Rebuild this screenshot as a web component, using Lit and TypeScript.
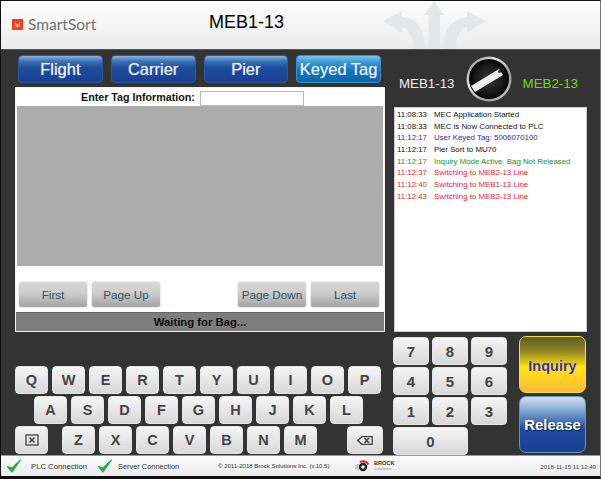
import { LitElement, html, css } from "lit";
import { customElement } from "lit/decorators.js";

const LOG: [string, string, string][] = [
  ["11:08:33", "MEC Application Started", "k"],
  ["11:08:33", "MEC is Now Connected to PLC", "k"],
  ["11:12:17", "User Keyed Tag: 5006070100", "b"],
  ["11:12:17", "Pier Sort to MU70", "k"],
  ["11:12:17", "Inquiry Mode Active. Bag Not Released", "g"],
  ["11:12:37", "Switching to MEB2-13 Line", "r"],
  ["11:12:40", "Switching to MEB1-13 Line", "r"],
  ["11:12:43", "Switching to MEB2-13 Line", "r"],
];

const check = html`<svg class="check" width="16" height="16" viewBox="0 0 16 16"><path d="M1.5 8.5 L6 14 L14.5 2 L6.2 10 Z" fill="#2fa84a" stroke="#2fa84a" stroke-width="1.2" stroke-linejoin="round"/></svg>`;

@customElement("app-root")
export class AppRoot extends LitElement {
  static styles = css`
    :host { display: block; width: 601px; height: 479px; font-family: "Liberation Sans", Arial, sans-serif; }
    .app { width: 601px; height: 479px; box-sizing: border-box; background: #333; border: 1px solid #111; border-right-color: #777; border-bottom: 3px solid #111; display: flex; flex-direction: column; overflow: hidden; }
    .header { height: 49px; flex: none; background: linear-gradient(#fdfdfd, #ececec); border-bottom: 1px solid #555; box-sizing: border-box; display: flex; align-items: center; position: relative; }
    .logo { margin-left: 11px; flex: none; display: block; margin-top: -2px; }
    .brand { font: 15.5px Lato, sans-serif; color: #707070; margin-left: 5px; width: 181px; flex: none; margin-top: -2px; }
    .title { font-size: 18px; color: #000; margin-top: -5px; }
    .arrows { position: absolute; left: 379px; top: 0; }
    .main { display: flex; padding: 5px 0 0 14px; gap: 9px; height: 284px; box-sizing: border-box; flex: none; }
    .left { width: 370px; flex: none; display: flex; flex-direction: column; }
    .tabs { display: flex; gap: 8px; padding: 0 4px 0 3px; height: 28px; margin-bottom: 4px; flex: none; }
    .tab { flex: 1; border: 1px solid #2a5a9f; border-radius: 4px; color: #f2f5ff; font-size: 16.5px; display: flex; align-items: center; justify-content: center; background: linear-gradient(#8fb3dc 0, #3f72b4 20%, #1f4e9c 45%, #1a3f95 100%); text-shadow: 0 0 1px #8fa6d8; }
    .tab.active { background: linear-gradient(#7fc3ea 0, #3797d6 25%, #1176bd 55%, #0f66ad 100%); border-color: #3a8fca; white-space: nowrap; }
    .panel { height: 245px; box-sizing: border-box; background: #fff; border: 1px solid #f0f0f0; display: flex; flex-direction: column; }
    .tagrow { height: 18px; display: flex; align-items: center; padding-left: 65px; font-size: 10.7px; font-weight: bold; color: #111; flex: none; }
    .tagrow input { margin: 2px 0 0 5px; width: 102px; height: 13px; box-sizing: content-box; padding: 0; border: 1px solid #bbb; background: #fff; outline: none; }
    .grid { margin: 0 1px; height: 160px; flex: none; background: #acacac; }
    .pager { display: flex; padding: 16px 3px 0; gap: 5px; flex: none; }
    .pg { width: 68px; height: 25px; border-radius: 2px; font-size: 11.7px; color: #2f5560; background: linear-gradient(#d8d8d8, #cfcfcf 40%, #a4a4a4); display: flex; align-items: center; justify-content: center; box-shadow: 0 0 0 1px #eee; }
    .spacer { width: 68px; }
    .wait { margin-top: 5px; flex: 1; background: #7d7d7d; border-top: 1px solid #666; font-size: 11.3px; font-weight: bold; color: #0a0a0a; display: flex; align-items: center; justify-content: center; }
    .right { width: 193px; flex: none; display: flex; flex-direction: column; }
    .selector { height: 52px; display: flex; align-items: center; justify-content: space-between; padding: 4px 9px 0 5px; box-sizing: border-box; font-size: 13.3px; color: #eee; flex: none; }
    .selector .on { color: #6fdc0a; }
    .knob { display: block; margin-top: -8px; }
    .log { height: 225px; background: #fff; border: 1px solid #ccc; box-sizing: border-box; padding: 1px 0 0 1px; font-size: 7.85px; }
    .line { height: 11.7px; line-height: 11.7px; display: flex; white-space: nowrap; }
    .line .t { width: 38px; flex: none; padding-left: 1px; box-sizing: border-box; }
    .k { color: #111; } .b { color: #2f28a0; } .g { color: #1c9026; } .r { color: #f52525; }
    .bottom { display: flex; padding: 3px 0 0 14px; flex: none; height: 121px; box-sizing: border-box; }
    .kb { width: 378px; flex: none; display: flex; flex-direction: column; gap: 2px; padding-top: 29px; box-sizing: border-box; }
    .row { display: flex; gap: 4px; height: 28px; }
    .row.r2 { padding-left: 19px; }
    .key { width: 33px; height: 28px; flex: none; box-sizing: border-box; border-radius: 4px; background: linear-gradient(#f5f5f5, #d8d8d8); border: 1px solid #e6e6e6; color: #444; font-size: 14.5px; font-weight: bold; display: flex; align-items: center; justify-content: center; }
    .gap { width: 6px; flex: none; }
    .gap2 { width: 22px; flex: none; }
    .key.wide { width: 36px; }
    .num { width: 126px; flex: none; display: grid; grid-template-columns: repeat(3, 36px); grid-auto-rows: 28px; gap: 2px 3px; align-content: start; }
    .num .key { width: 36px; font-size: 15px; }
    .num .zero { grid-column: span 2; width: 75px; }
    .acts { display: flex; flex-direction: column; gap: 3px; width: 67px; margin-top: -1px; }
    .act { height: 57px; box-sizing: border-box; border-radius: 7px; display: flex; align-items: center; justify-content: center; font-size: 14.5px; font-weight: bold; }
    .inq { border: 1px solid #f6e31b; color: #3a2f8f; padding-top: 3px; background: linear-gradient(#5d5a2c, #8f8420 25%, #ffe313 55%, #fdbb3a); text-shadow: 0 0 1px #fff; }
    .rel { border: 1px solid #5a97cf; color: #fff; font-size: 15px; background: linear-gradient(#d4e2f0, #8aaed8 22%, #1f4c9e 58%, #1b3f94); text-shadow: 1px 1px 1px #0a1a50; }
    .status { height: 21px; flex: none; background: linear-gradient(#fafafa, #ececec); display: flex; align-items: center; font-size: 7.7px; color: #333; border-top: 1px solid #999; box-sizing: border-box; white-space: nowrap; }
    .check { display: block; margin-left: 5px; flex: none; }
    .s1 { margin-left: 9px; width: 61px; flex: none; }
    .s2 { margin-left: 5px; width: 75px; font-size: 7.4px; flex: none; }
    .copy { margin-left: 25px; width: 111px; font-size: 6.05px; flex: none; }
    .blogo { margin-left: 26px; flex: none; display: flex; align-items: center; gap: 3px; }
    .bname { font-size: 5.6px; font-weight: bold; line-height: 5.5px; color: #333; }
    .bname span { display: block; font-weight: normal; color: #888; font-size: 4.4px; line-height: 4.5px; }
    .date { margin-left: auto; margin-right: 4px; font-size: 6.1px; color: #444; }
  `;

  render() {
    return html`<div class="app">
      <div class="header">
        <svg class="logo" width="11" height="11" viewBox="0 0 11 11"><rect width="11" height="11" fill="#ef3f23"/><path d="M3 3 L4 5 L4 8 M8 3 L7 5 L7 8 M5.5 5 L5.5 9" stroke="#fbd3b0" stroke-width="1" fill="none"/></svg>
        <span class="brand">SmartSort</span>
        <span class="title">MEB1-13</span>
        <svg class="arrows" width="110" height="48" viewBox="0 0 110 48">
          <g fill="#e4e6e7">
            <path d="M54 0 L64 14 H60 V48 H48.5 V14 H44 Z"/>
            <path d="M3 20 L22 10 V16 C36 17 45 27 45 48 H33 C33 36 30 28 22 26 V32 Z"/>
            <path d="M106 20 L87 10 V16 C73 17 64 27 64 48 H76 C76 36 79 28 87 26 V32 Z"/>
          </g>
        </svg>
      </div>
      <div class="main">
        <div class="left">
          <div class="tabs">
            <div class="tab">Flight</div><div class="tab">Carrier</div><div class="tab">Pier</div><div class="tab active">Keyed Tag</div>
          </div>
          <div class="panel">
            <div class="tagrow">Enter Tag Information:<input /></div>
            <div class="grid"></div>
            <div class="pager">
              <div class="pg">First</div><div class="pg">Page Up</div><div class="spacer"></div><div class="pg">Page Down</div><div class="pg">Last</div>
            </div>
            <div class="wait">Waiting for Bag...</div>
          </div>
        </div>
        <div class="right">
          <div class="selector">
            <span>MEB1-13</span>
            <svg class="knob" width="46" height="46" viewBox="0 0 46 46">
              <defs><linearGradient id="ring" x1="0" y1="0" x2="1" y2="1"><stop offset="0" stop-color="#777"/><stop offset=".35" stop-color="#e4e4e4"/><stop offset=".7" stop-color="#999"/><stop offset="1" stop-color="#dcdcdc"/></linearGradient>
              <radialGradient id="fc" cx=".5" cy=".5" r=".5"><stop offset="0" stop-color="#3a3a3a"/><stop offset=".7" stop-color="#181818"/><stop offset="1" stop-color="#050505"/></radialGradient></defs>
              <circle cx="23" cy="23" r="22.5" fill="url(#ring)"/>
              <circle cx="23" cy="23" r="20" fill="url(#fc)"/>
              <path d="M5 30 L33 13 L37 19 L9 36 Z" fill="#f0f0f0"/>
              <circle cx="33.5" cy="15.5" r="1.6" fill="#333"/>
            </svg>
            <span class="on">MEB2-13</span>
          </div>
          <div class="log">
            ${LOG.map(([t, m, c]) => html`<div class="line ${c}"><span class="t">${t}</span><span>${m}</span></div>`)}
          </div>
        </div>
      </div>
      <div class="bottom">
        <div class="kb">
          <div class="row">${[..."QWERTYUIOP"].map((k) => html`<div class="key">${k}</div>`)}</div>
          <div class="row r2">${[..."ASDFGHJKL"].map((k) => html`<div class="key">${k}</div>`)}</div>
          <div class="row">
            <div class="key"><svg width="14" height="12" viewBox="0 0 14 12"><rect x="1" y="1" width="12" height="10" fill="none" stroke="#444" stroke-width="1.3"/><path d="M4.5 3.5 L9.5 8.5 M9.5 3.5 L4.5 8.5" stroke="#444" stroke-width="1.6"/></svg></div>
            <div class="gap"></div>
            ${[..."ZXCVBNM"].map((k) => html`<div class="key">${k}</div>`)}
            <div class="gap2"></div>
            <div class="key wide"><svg width="16" height="9" viewBox="0 0 16 9"><path d="M5 .7 H15.2 V8.3 H5 L.8 4.5 Z" fill="none" stroke="#444" stroke-width="1.3"/><path d="M7.5 2 L12 7 M12 2 L7.5 7" stroke="#444" stroke-width="1.6"/></svg></div>
          </div>
        </div>
        <div class="num">
          ${["7", "8", "9", "4", "5", "6", "1", "2", "3"].map((k) => html`<div class="key">${k}</div>`)}
          <div class="key zero">0</div>
        </div>
        <div class="acts">
          <div class="act inq">Inquiry</div>
          <div class="act rel">Release</div>
        </div>
      </div>
      <div class="status">
        ${check}<span class="s1">PLC Connection</span>${check}<span class="s2">Server Connection</span>
        <span class="copy">© 2011-2018 Brock Solutions Inc. (v.10.5)</span>
        <div class="blogo">
          <svg width="16" height="13" viewBox="0 0 16 13"><circle cx="8" cy="7" r="3" fill="none" stroke="#222" stroke-width="2.4"/><path d="M5 2.2 A6 6 0 0 1 13.5 4.5" fill="none" stroke="#d22" stroke-width="2"/><path d="M1 5 V9 M3 4 V10" stroke="#888" stroke-width=".8"/></svg>
          <div class="bname">BROCK<span>solutions</span></div>
        </div>
        <span class="date">2018-11-15 11:12:49</span>
      </div>
    </div>`;
  }
}
